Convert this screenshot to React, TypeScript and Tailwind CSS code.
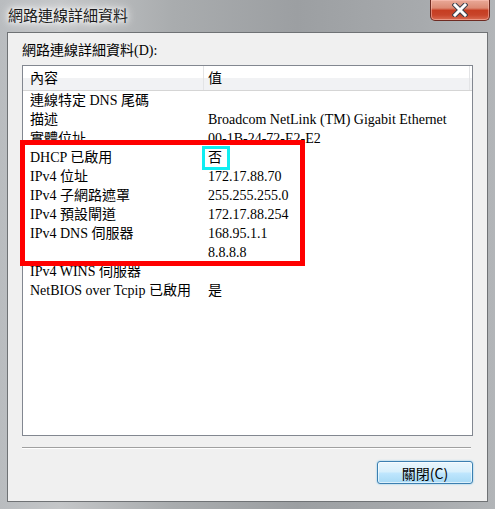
import React from 'react';

const rows: [string, string][] = [
  ['連線特定 DNS 尾碼', ''],
  ['描述', 'Broadcom NetLink (TM) Gigabit Ethernet'],
  ['實體位址', '00-1B-24-72-E2-E2'],
  ['DHCP 已啟用', '否'],
  ['IPv4 位址', '172.17.88.70'],
  ['IPv4 子網路遮罩', '255.255.255.0'],
  ['IPv4 預設閘道', '172.17.88.254'],
  ['IPv4 DNS 伺服器', '168.95.1.1'],
  ['', '8.8.8.8'],
  ['IPv4 WINS 伺服器', ''],
  ['NetBIOS over Tcpip 已啟用', '是']
];

function CloseGlyph() {
  return (
    <svg width="16" height="14" viewBox="0 0 16 14">
      <path d="M3 2 L13 12 M13 2 L3 12" stroke="#3b3f4a" strokeWidth="5" strokeLinecap="square" />
      <path d="M3 2 L13 12 M13 2 L3 12" stroke="#ffffff" strokeWidth="3" strokeLinecap="square" />
    </svg>
  );
}

export default function App() {
  return (
    <div className="relative w-[495px] h-[509px] flex flex-col overflow-hidden bg-[linear-gradient(90deg,#b9bcbf_0%,#c4c6c8_12%,#a9acae_35%,#9c9fa2_60%,#a7aaad_85%,#b2b5b8_100%)] font-['Liberation_Serif','Noto_Sans_CJK_TC',serif] text-black">
      {/* title bar */}
      <div className="h-[32px] flex items-start justify-between shrink-0">
        <div className="pl-[8px] pt-[5px] text-[15px] leading-[20px] text-[#1b1b1b] font-['Noto_Sans_CJK_TC','Noto_Sans',sans-serif] [text-shadow:0_0_8px_#ffffff,0_0_12px_#ffffff,0_0_4px_#ffffff]">
          網路連線詳細資料
        </div>
        <button
          type="button"
          className="mr-[5px] w-[60px] h-[21px] flex items-center justify-center rounded-b-[5px] border border-t-0 border-[#6e2b22] bg-[linear-gradient(180deg,#e9a998_0%,#dc8a74_40%,#c63d22_52%,#c8442a_75%,#d96c53_100%)] shadow-[inset_0_0_0_1px_rgba(255,200,190,0.5)]"
        >
          <CloseGlyph />
        </button>
      </div>

      {/* client area */}
      <div className="flex-1 mx-[7px] mb-[7px] border border-[#6f7275] bg-[#f0f0f0] flex flex-col px-[14px]">
        <div className="pt-[9px] text-[14px] leading-[17px]">網路連線詳細資料(D):</div>

        <div className="mt-[6px] h-[371px] border border-[#828790] bg-white flex flex-col text-[14px]">
          <div className="h-[25px] flex border-b border-[#d5d5d5] bg-[linear-gradient(180deg,#ffffff_0%,#ffffff_50%,#f1f2f4_51%,#f1f2f4_100%)] shrink-0">
            <div className="w-[181px] pl-[7px] flex items-center border-r border-[#e3e4e6]">內容</div>
            <div className="flex-1 pl-[4px] flex items-center border-r border-[#e3e4e6] mr-[2px]">值</div>
          </div>
          {rows.map(([k, v], i) => (
            <div key={i} className="h-[19px] flex items-center whitespace-nowrap">
              <div className="w-[185px] pl-[7px] overflow-hidden">{k}</div>
              <div className="flex-1 pl-[0px]">{v}</div>
            </div>
          ))}
        </div>

        <div className="mt-[11px] mr-[2px] h-px bg-[#a0a0a0] border-b border-white box-content" />

        <div className="mt-[12px] flex justify-end">
          <button
            type="button"
            className="w-[96px] h-[23px] rounded-[3px] border border-[#3c7fb1] bg-[linear-gradient(180deg,#eaf6fd_0%,#d9f0fc_45%,#bee6fd_55%,#a7d9f5_100%)] shadow-[inset_0_0_0_1px_rgba(255,255,255,0.6),0_0_2px_#6fc0ec] text-[14px] leading-[20px] text-black font-['Noto_Sans_CJK_TC','Noto_Sans',sans-serif]"
          >
            關閉(C)
          </button>
        </div>
      </div>

      {/* annotation overlays */}
      <div className="absolute left-[20px] top-[140px] w-[285px] h-[126px] border-[5px] border-[#ff0000]" />
      <div className="absolute left-[202px] top-[146px] w-[28px] h-[24px] border-[3px] border-[#10eef2]" />
    </div>
  );
}
